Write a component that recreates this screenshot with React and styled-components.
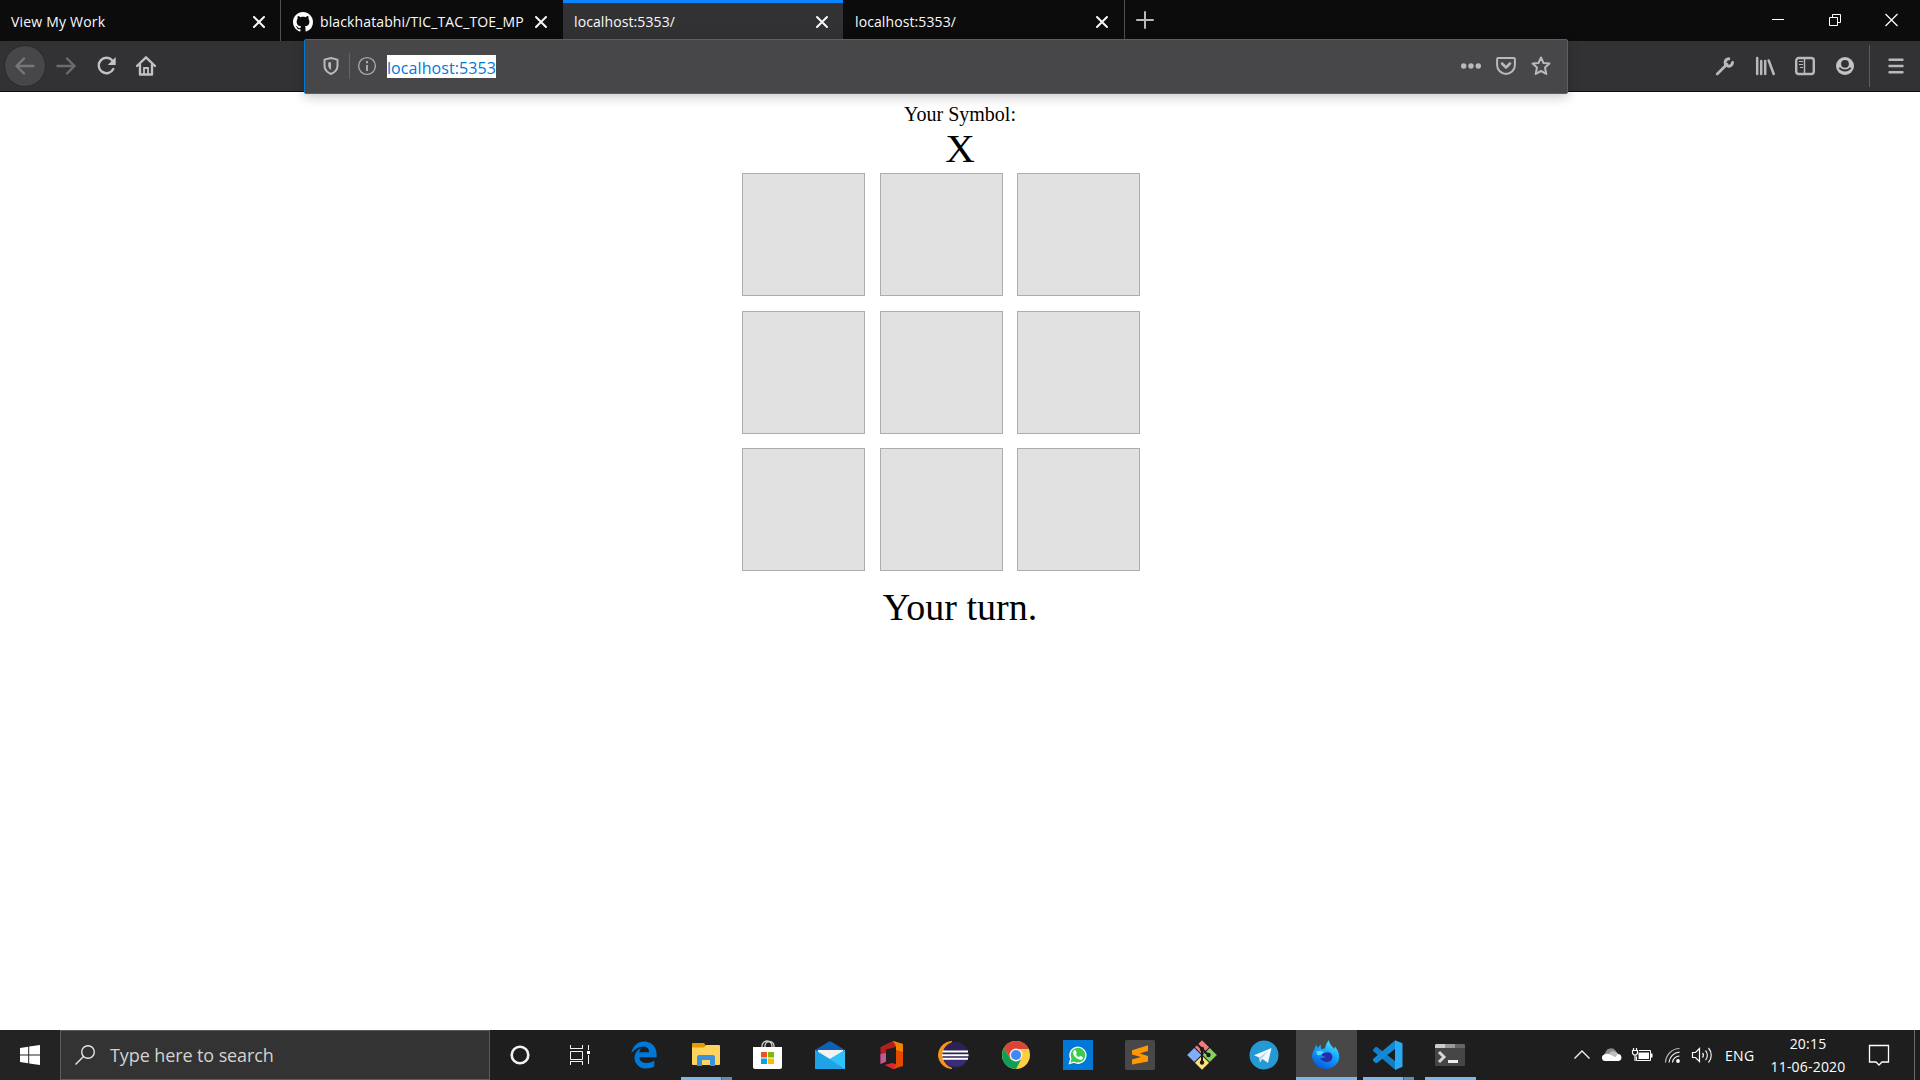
import React from "react";
import styled, { createGlobalStyle } from "styled-components";
import { FaEdgeLegacy } from "react-icons/fa";

const GlobalStyle = createGlobalStyle`
  * { box-sizing: border-box; }
  body { margin: 0; background: #fff; overflow: hidden; }
`;

const ui = `"Open Sans", "Noto Sans", sans-serif`;

const Screen = styled.div`
  width: 1920px;
  height: 1080px;
  display: flex;
  flex-direction: column;
`;

/* ---------- tab strip ---------- */

const TabStrip = styled.div`
  height: 41px;
  flex: none;
  display: flex;
  background: #0c0c0d;
`;

const Tab = styled.div`
  width: ${(p) => p.$width}px;
  height: 41px;
  display: flex;
  align-items: center;
  padding: 2px ${(p) => p.$end}px 0 ${(p) => p.$start || 11}px;
  font: 14px ${ui};
  color: #f9f9fa;
  background: ${(p) => (p.$active ? "#323234" : "transparent")};
  box-shadow: ${(p) => (p.$active ? "inset 0 3px #0a84ff" : "none")};
  border-right: ${(p) => (p.$divider ? "1px solid #4f4f51" : "none")};
`;

const TabTitle = styled.span`
  flex: 1;
  white-space: nowrap;
  letter-spacing: ${(p) => p.$track || 0}px;
`;

const Svg = styled.svg`
  display: block;
  flex: none;
  overflow: visible;
`;

const Favicon = styled(Svg)`
  margin: 0 7px 0 1px;
`;

const WindowControls = styled.div`
  margin-left: auto;
  display: flex;
  align-items: center;
  gap: 37px;
  padding: 0 18px 1px 0;
`;

const NewTab = styled.div`
  display: flex;
  align-items: center;
  padding: 0 0 1px 10px;
`;

/* ---------- toolbar ---------- */

const Toolbar = styled.div`
  height: 51px;
  flex: none;
  display: flex;
  background: #323234;
  border-bottom: 1px solid #0c0c0d;
`;

const NavButtons = styled.div`
  width: 304px;
  display: flex;
  align-items: center;
  gap: 1px;
  padding-left: 5px;
`;

const NavButton = styled.div`
  width: 40px;
  height: 40px;
  border-radius: 50%;
  display: grid;
  place-items: center;
  background: ${(p) => (p.$filled ? "#474749" : "transparent")};
  box-shadow: ${(p) => (p.$filled ? "0 0 0 1px #2a2a2c" : "none")};
`;

const UrlBar = styled.div`
  width: 1264px;
  height: 55px;
  margin-top: -2px;
  z-index: 1;
  display: flex;
  align-items: center;
  padding: 0 16px 1px 16px;
  background: #474749;
  border: 1px solid #0078d7;
  border-radius: 2px;
  box-shadow: 0 3px 12px rgba(0, 0, 0, 0.22);
`;

const UrlDivider = styled.div`
  width: 1px;
  height: 26px;
  margin: 0 7px 0 8px;
  background: #5f6670;
`;

const Url = styled.span`
  margin: 1px 0 0 10px;
  height: 23px;
  font: 16px/26px ${ui};
  letter-spacing: 0.08px;
  color: #0078d7;
  background: #fff;
`;

const UrlActions = styled.div`
  margin-left: auto;
  display: flex;
  gap: 15px;
`;

const Tools = styled.div`
  flex: 1;
  display: flex;
  align-items: center;
  justify-content: flex-end;
  gap: 20px;
  padding-right: 14px;
`;

const ToolDivider = styled.div`
  width: 1px;
  height: 42px;
  margin: 0 -4px 0 -6px;
  background: #5c5c5e;
`;

/* ---------- page ---------- */

const Page = styled.main`
  flex: 1;
  display: flex;
  flex-direction: column;
  align-items: center;
  padding-top: 11px;
  font-family: "Liberation Serif", "Times New Roman", serif;
  color: #000;
`;

const Label = styled.div`
  font-size: 20px;
  line-height: 23px;
`;

const Symbol = styled.div`
  font-size: 41px;
  line-height: 45px;
  padding-bottom: 2px;
`;

const Board = styled.div`
  width: 398px;
  margin-right: 38px;
  display: grid;
  grid-template-columns: 138px 137px 123px;
  grid-template-rows: 138px 137px 123px;
`;

const Cell = styled.button`
  width: 123px;
  height: 123px;
  padding: 0;
  background: #e1e1e1;
  border: 1px solid #adadad;
`;

const Status = styled.div`
  margin-top: 13px;
  font-size: 38px;
  line-height: 46px;
`;

/* ---------- taskbar ---------- */

const Taskbar = styled.div`
  height: 50px;
  flex: none;
  display: flex;
  background: #1e1e1e;
  font-family: ${ui};
`;

const Start = styled.div`
  width: 60px;
  display: grid;
  place-items: center;
  background: #232323;
`;

const Search = styled.div`
  width: 430px;
  display: flex;
  align-items: center;
  padding-left: 14px;
  border: 1px solid #5c5c5c;
  background: #333;
  color: #d2d2d2;
  font-size: 18px;
  line-height: 26px;
`;

const SearchText = styled.span`
  margin: 0 0 0 15px;
  letter-spacing: -0.1px;
  white-space: nowrap;
`;

const SystemButton = styled.div`
  width: 60px;
  padding: 9px 0 0 14px;
`;

const Apps = styled.div`
  display: flex;
  gap: 1px;
  margin-left: 4px;
`;

const TaskApp = styled.div`
  width: 61px;
  height: 50px;
  display: flex;
  flex-direction: column;
  justify-content: space-between;
  padding-top: 9px;
  background: ${(p) => (p.$current ? "#484848" : "transparent")};
  & > svg { margin-left: 14px; }
`;

const EdgeIcon = styled(FaEdgeLegacy)`
  && {
    width: 28px;
    height: 28px;
    margin: 2px 0 0 16px;
  }
  color: #0078d7;
`;

const Running = styled.div`
  height: 3px;
  margin: 0 ${(p) => (p.$full ? 0 : 5)}px;
  background: ${(p) => (p.$stacked ? "linear-gradient(90deg, #76b9ed 40px, #3f6282 40px, #3f6282 41px, #5a8db8 41px)" : "#76b9ed")};
`;

const Tray = styled.div`
  flex: 1;
  display: flex;
  align-items: center;
  gap: 6px;
  padding-left: 89px;
  color: #fff;
  font-size: 14px;
`;

const Language = styled.span`
  width: 31px;
  margin-left: 5px;
  letter-spacing: 0.3px;
`;

const Clock = styled.div`
  width: 92px;
  text-align: center;
  line-height: 23px;
  letter-spacing: 0.2px;
`;

const Notifications = styled.div`
  margin-left: 7px;
`;

const ShowDesktop = styled.div`
  width: 6px;
  height: 50px;
  margin-left: auto;
  border-left: 1px solid #6a6a6a;
`;

/* ---------- icons ---------- */

const Ico = ({ s = 20, children, ...rest }) => (
  <Svg width={s} height={s} viewBox={`0 0 ${s} ${s}`} fill="none" {...rest}>
    {children}
  </Svg>
);

const line = { stroke: "#b9b9ba", strokeWidth: 2.4, strokeLinecap: "round", strokeLinejoin: "round" };

const CloseTab = () => (
  <Ico s={12}>
    <path d="M1 1l10 10M11 1L1 11" stroke="#f9f9fa" strokeWidth="2" strokeLinecap="round" />
  </Ico>
);

const GitHubMark = () => (
  <Favicon width="20" height="20" viewBox="0 0 16 16">
    <path
      fill="#fff"
      d="M8 0C3.58 0 0 3.58 0 8c0 3.54 2.29 6.53 5.47 7.59.4.07.55-.17.55-.38 0-.19-.01-.82-.01-1.49-2.01.37-2.53-.49-2.69-.94-.09-.23-.48-.94-.82-1.13-.28-.15-.68-.52-.01-.53.63-.01 1.08.58 1.23.82.72 1.21 1.87.87 2.33.66.07-.52.28-.87.51-1.07-1.78-.2-3.64-.89-3.64-3.95 0-.87.31-1.59.82-2.15-.08-.2-.36-1.02.08-2.12 0 0 .67-.21 2.2.82.64-.18 1.32-.27 2-.27s1.36.09 2 .27c1.53-1.04 2.2-.82 2.2-.82.44 1.1.16 1.92.08 2.12.51.56.82 1.27.82 2.15 0 3.07-1.87 3.75-3.65 3.95.29.25.54.73.54 1.48 0 1.07-.01 1.93-.01 2.2 0 .21.15.46.55.38A8.01 8.01 0 0016 8c0-4.42-3.58-8-8-8z"
    />
  </Favicon>
);

const apps = [
  { id: "edge", icon: <EdgeIcon /> },
  {
    id: "explorer",
    running: true,
    stacked: true,
    icon: (
      <Ico s={32}>
        <path d="M2 5a1 1 0 011-1h11l1.500 2v5H2z" fill="#e19c00" />
        <path d="M2 8.500h12l2-2.500h13a1 1 0 011 1v18a1 1 0 01-1 1H3a1 1 0 01-1-1z" fill="#ffd45e" />
        <path d="M7 27V18a2 2 0 012-2h14a2 2 0 012 2v9h-5v-6h-8v6z" fill="#3a91dc" />
      </Ico>
    ),
  },
  {
    id: "store",
    icon: (
      <Ico s={32}>
        <path d="M10 9V7a5 5 0 0110 0v2M13 9V7a4.500 4.500 0 019 0v2" stroke="#cfcfcf" strokeWidth="1.300" />
        <path d="M1 8h29v20a2 2 0 01-2 2H3a2 2 0 01-2-2z" fill="#fff" />
        <path d="M9 13h6v5.500H9z" fill="#f25022" />
        <path d="M16 13h6v5.500h-6z" fill="#7fba00" />
        <path d="M9 19.500h6V25H9z" fill="#00a4ef" />
        <path d="M16 19.500h6V25h-6z" fill="#ffb900" />
      </Ico>
    ),
  },
  {
    id: "mail",
    icon: (
      <Ico s={32}>
        <path d="M1 11l14-8.500a2 2 0 012 0L31 11v4H1z" fill="#0f5fb4" />
        <path d="M4 11h25v9H4z" fill="#f3f3f3" />
        <path d="M1 11l15 9 15-9v19H1z" fill="#35b8f1" />
        <path d="M31 11v19L16 20z" fill="#2fc3f7" />
        <path d="M1 30V11l30 19z" fill="#1fa2e6" />
      </Ico>
    ),
  },
  {
    id: "office",
    icon: (
      <Ico s={32}>
        <path d="M4.500 8L17 2l3 1v5l-10 2.500V23l-5.500 2z" fill="#b3201f" />
        <path d="M4.500 15v10L10 22.500V14z" fill="#b85a9c" />
        <path d="M8.500 26l7.500-2 4 1v4.500L17 30z" fill="#e0262f" />
        <path d="M17 2l10 3v22l-10 3 3-4V8z" fill="#e34a00" />
        <path d="M17 2l10 3v8l-7-2V6z" fill="#f08205" />
      </Ico>
    ),
  },
  {
    id: "eclipse",
    icon: (
      <Ico s={32}>
        <path d="M14 2.500A13.500 13.500 0 0014 29.500 15 15 0 0114 2.500z" fill="#f7941e" stroke="#f7941e" />
        <circle cx="17.500" cy="16" r="13" fill="#2c2255" />
        <path d="M6 20h23a12.500 12.500 0 01-23 0z" fill="#43378b" opacity=".6" />
        <path d="M4.500 12.500h25.500M4 16.200h26.500M4.500 19.700h25.500" stroke="#fff" strokeWidth="1.900" />
      </Ico>
    ),
  },
  {
    id: "chrome",
    icon: (
      <Ico s={32}>
        <circle cx="16" cy="16" r="14" fill="#ffcd40" />
        <path d="M16 16V10h12.600A14 14 0 003.900 9L10 19z" fill="#db4437" />
        <path d="M3.900 9A14 14 0 0016 30l5.500-10.500L16 22l-5.500-2z" fill="#0f9d58" />
        <circle cx="16" cy="16" r="6.400" fill="#f1f1f1" />
        <circle cx="16" cy="16" r="5" fill="#4285f4" />
      </Ico>
    ),
  },
  {
    id: "whatsapp",
    icon: (
      <Ico s={32}>
        <path d="M1 1h30v30H1z" fill="#0078d7" />
        <path d="M7.500 24.500l1.300-4.600A8 8 0 1112 23.200z" fill="#3ccb50" stroke="#fff" strokeWidth="1.300" />
        <path d="M12 11.500l1.500-.5 1.300 3-.9 1.300c.8 1.500 1.800 2.300 3 2.900l1.200-1.400 2.800 1.400c.2 2-1.500 2.700-2.900 2.500-3.600-.6-6.600-3.700-6.900-6.700 0-1 .4-1.900.9-2.500z" fill="#fff" />
      </Ico>
    ),
  },
  {
    id: "sublime",
    icon: (
      <Ico s={32}>
        <rect x="1" y="1" width="30" height="30" rx="1.500" fill="#484848" />
        <path d="M8 11.300l16-5v5.600l-8.500 2.600L24 17v5.500L8 25.500v-5l9-2.500-9-2.500z" fill="#ff9800" />
      </Ico>
    ),
  },
  {
    id: "git",
    icon: (
      <Ico s={32}>
        <g transform="translate(16 16) rotate(45)">
          <rect x="-10.500" y="-10.500" width="10" height="10" fill="#f27a7c" />
          <rect x=".5" y="-10.500" width="10" height="10" fill="#84cf5e" />
          <rect x="-10.500" y=".5" width="10" height="10" fill="#7eaefc" />
          <rect x=".5" y=".5" width="10" height="10" fill="#ffe27c" />
        </g>
        <path d="M10 4l6 6v13M16 10l6.500 6" stroke="#1c1c1c" strokeWidth="2" />
        <circle cx="16" cy="10" r="2.200" fill="#1c1c1c" />
        <circle cx="22.500" cy="16" r="2.200" fill="#1c1c1c" />
        <circle cx="16" cy="23.500" r="2.200" fill="#1c1c1c" />
      </Ico>
    ),
  },
  {
    id: "telegram",
    icon: (
      <Ico s={32}>
        <circle cx="16" cy="16" r="14.500" fill="#2599d4" />
        <path d="M6 16.300L23.500 9 20 24l-5.500-4-2.500 3.500-.8-5z" fill="#f2f7fb" />
        <path d="M11.200 18.500L20 12l-6.300 7.500-1.700 4z" fill="#b9d3e4" />
      </Ico>
    ),
  },
  {
    id: "firefox",
    running: true,
    current: true,
    icon: (
      <Ico s={32}>
        <defs>
          <linearGradient id="ffx" x1="0.8" y1="0" x2="0.3" y2="1">
            <stop offset="0" stopColor="#4ff0fb" />
            <stop offset=".45" stopColor="#16a5ff" />
            <stop offset="1" stopColor="#0558dc" />
          </linearGradient>
        </defs>
        <path d="M4.500 10l1.500-4 2 3 2.500-3.500.5 4.500 4-.5c.5-3.500 2-6.500 4-8.500 0 4 3 5.500 5 9l1-2.500c4 5 5.500 10.500 3 15.500A14 14 0 012 18c0-3 1-6 2.500-8z" fill="url(#ffx)" />
        <path d="M11 14c3 1 5-1.500 8-.5 4 1 4.500 6 1.500 8.500-3.500 2.500-9 .5-10.500-3.500 2 1 4.500.5 5.500-1-2 .5-4-.5-4.500-3.500z" fill="#2b2ba8" />
        <path d="M6 12.500c3-1.500 6-1 8 1l-2.500 2c-2 1-3.500 1-4.500 0z" fill="#52dcfb" />
      </Ico>
    ),
  },
  {
    id: "vscode",
    running: true,
    stacked: true,
    icon: (
      <Ico s={32}>
        <path d="M1 10.500l2.500-2.500H5L23 22v8.500L1 12z" fill="#0f7fc9" />
        <path d="M1 21.500L3.500 24H5L23 10V1.500L1 20z" fill="#1489d6" />
        <path d="M23 1.200l7.500 3v23.600L23 31z" fill="#2aa9f4" />
      </Ico>
    ),
  },
  {
    id: "terminal",
    running: true,
    icon: (
      <Ico s={32}>
        <rect x="1" y="5" width="30" height="22" rx="1" fill="#464646" />
        <path d="M1 9V6l1-1h9v4z" fill="#ccc" />
        <path d="M11 5h10v4H11z" fill="#999" />
        <path d="M21 5h9l1 1v3H21z" fill="#666" />
        <path d="M5 13l5 5-5 5" stroke="#d6d6d6" strokeWidth="3" />
        <path d="M14 21h10v3H14z" fill="#eee" />
      </Ico>
    ),
  },
];

export default function App() {
  return (
    <Screen>
      <GlobalStyle />
      <TabStrip>
        <Tab $width={281} $end={15} $divider>
          <TabTitle $track={0.2}>View My Work</TabTitle>
          <CloseTab />
        </Tab>
        <Tab $width={282} $end={16}>
          <GitHubMark />
          <TabTitle $track={0.12}>blackhatabhi/TIC_TAC_TOE_MP</TabTitle>
          <CloseTab />
        </Tab>
        <Tab $width={280} $end={15} $active>
          <TabTitle $track={0.1}>localhost:5353/</TabTitle>
          <CloseTab />
        </Tab>
        <Tab $width={282} $start={12} $end={16} $divider>
          <TabTitle $track={0.1}>localhost:5353/</TabTitle>
          <CloseTab />
        </Tab>
        <NewTab>
          <Ico>
            <path d="M10 2v16M2 10h16" stroke="#b9b9ba" strokeWidth="2" strokeLinecap="round" />
          </Ico>
        </NewTab>
        <WindowControls>
          <Ico>
            <path d="M4 9.500h12" stroke="#fff" />
          </Ico>
          <Ico>
            <path d="M4.500 7.500h8v8h-8zM7.500 7.500v-3h8v8h-3" stroke="#fff" />
          </Ico>
          <Ico>
            <path d="M3.500 4l12 12M15.500 4l-12 12" stroke="#fff" strokeWidth="1.200" />
          </Ico>
        </WindowControls>
      </TabStrip>

      <Toolbar>
        <NavButtons>
          <NavButton $filled>
            <Ico>
              <path d="M18.500 10H1.500M9 2.500L1.500 10 9 17.500" {...line} stroke="#77777a" />
            </Ico>
          </NavButton>
          <NavButton>
            <Ico>
              <path d="M1.500 10h17M11 2.500l7.500 7.500-7.500 7.500" {...line} stroke="#6c6c6e" />
            </Ico>
          </NavButton>
          <NavButton>
            <Ico>
              <path d="M15.300 4.500A7.700 7.700 0 1016.300 13" {...line} stroke="#c2c2c3" />
              <path d="M18.700 1v8h-8z" fill="#c2c2c3" />
            </Ico>
          </NavButton>
          <NavButton>
            <Ico>
              <path d="M-1 10L8 1.300 17 10M2 9v9.500h12V9" {...line} stroke="#c2c2c3" />
              <path d="M6 18v-6h4v6" stroke="#c2c2c3" strokeWidth="1.800" />
            </Ico>
          </NavButton>
        </NavButtons>

        <UrlBar>
          <Ico>
            <path d="M10 2l6.500 1.600v6c0 4-3 7-6.500 8.400-3.500-1.400-6.500-4.400-6.500-8.400v-6z" {...line} strokeWidth="2" />
            <path d="M10 6v8c-1.700-1-2.800-2.600-2.800-4.400V6.500z" fill="#b9b9ba" />
          </Ico>
          <UrlDivider />
          <Ico>
            <circle cx="10" cy="10" r="8.400" stroke="#a9a9aa" strokeWidth="1.400" />
            <path d="M10 9v6M10 5v2.200" stroke="#a9a9aa" strokeWidth="2" />
          </Ico>
          <Url>localhost:5353</Url>
          <UrlActions>
            <Ico>
              <circle cx="2.700" cy="10" r="2.700" fill="#b9b9ba" />
              <circle cx="10" cy="10" r="2.700" fill="#b9b9ba" />
              <circle cx="17.300" cy="10" r="2.700" fill="#b9b9ba" />
            </Ico>
            <Ico>
              <path d="M2.300 2h15.400a1.200 1.200 0 011.200 1.200V9a8.900 8.900 0 01-17.800 0V3.200A1.200 1.200 0 012.300 2z" {...line} strokeWidth="2" />
              <path d="M6 7.500l4 4 4-4" {...line} strokeWidth="2.500" />
            </Ico>
            <Ico>
              <path d="M10 1.500l2.500 5.500 6 .6-4.500 4 1.300 6.300L10 15l-5.300 2.900L6 11.600 1.500 7.600l6-.6z" {...line} strokeWidth="2" />
            </Ico>
          </UrlActions>
        </UrlBar>

        <Tools>
          <Ico>
            <path d="M2.200 18L12 8.300" {...line} strokeWidth="2.700" />
            <path d="M17.200 6.200A3.700 3.700 0 1113.500 2.600" {...line} strokeWidth="3" transform="translate(.3 .2)" />
          </Ico>
          <Ico>
            <path d="M2.200 2v16M6.200 5v13M10.200 5v13M13.700 4.500l5 13.500" {...line} strokeWidth="2.500" />
          </Ico>
          <Ico>
            <rect x="1.200" y="2" width="17.600" height="16" rx="2.500" {...line} strokeWidth="2.400" />
            <path d="M9.500 2v16" stroke="#b9b9ba" strokeWidth="1.500" />
            <path d="M4 5.500h4M4 8.500h4M5 11.500h3" stroke="#b9b9ba" strokeWidth="1.200" />
          </Ico>
          <Ico>
            <circle cx="10" cy="10" r="9" fill="#c2c2c3" />
            <circle cx="10" cy="7.800" r="3.900" fill="#323234" />
            <path d="M4.300 11.800c1.300 1.800 3.300 2.700 5.700 2.700s4.400-.9 5.700-2.700" stroke="#323234" strokeWidth="1.800" />
          </Ico>
          <ToolDivider />
          <Ico>
            <path d="M3.500 3.800h13M3.500 10h13M3.500 16.200h13" {...line} />
          </Ico>
        </Tools>
      </Toolbar>

      <Page>
        <Label>Your Symbol:</Label>
        <Symbol>X</Symbol>
        <Board>
          {Array.from({ length: 9 }, (_, i) => (
            <Cell key={i} />
          ))}
        </Board>
        <Status>Your turn.</Status>
      </Page>

      <Taskbar>
        <Start>
          <Ico>
            <path d="M0 2.900L8.200 1.800v7.700H0zM9.200 1.600L20 0v9.500H9.200zM0 10.500h8.200v7.700L0 17.100zM9.200 10.500H20V20L9.200 18.400z" fill="#fff" />
          </Ico>
        </Start>
        <Search>
          <Ico>
            <circle cx="13" cy="7" r="6.300" stroke="#e6e6e6" strokeWidth="1.400" />
            <path d="M8.500 11.500L.5 19.500" stroke="#e6e6e6" strokeWidth="1.400" />
          </Ico>
          <SearchText>Type here to search</SearchText>
        </Search>
        <SystemButton>
          <Ico s={32}>
            <circle cx="16" cy="16" r="8.300" stroke="#f2f2f2" strokeWidth="2.600" />
          </Ico>
        </SystemButton>
        <SystemButton>
          <Ico s={32}>
            <path d="M6.500 6v4M18.500 6v4M6 9.500h13M6.500 12.500h12v8h-12zM6 22.500h13M6.500 22v4M18.500 22v4M24.500 6v5M24.500 16v9" stroke="#f2f2f2" />
            <path d="M23 12h3v3h-3z" fill="#fff" />
          </Ico>
        </SystemButton>
        <Apps>
          {apps.map((a) => (
            <TaskApp key={a.id} $current={a.current}>
              {a.icon}
              {a.running && <Running $full={a.current} $stacked={a.stacked} />}
            </TaskApp>
          ))}
        </Apps>
        <Tray>
          <Ico s={24}>
            <path d="M4.500 15.500L12 8l7.500 7.500" stroke="#f2f2f2" strokeWidth="1.400" />
          </Ico>
          <Ico s={24}>
            <path d="M5 15a4 4 0 01.500-5.500 5.700 5.700 0 0110-2l2 4z" fill="#8b8b8b" />
            <path d="M9 10.500a5.500 5.500 0 019.500 1l-5 3.500z" fill="#bdbdbd" />
            <path d="M5 18a3.300 3.300 0 01-.5-6.500 6 6 0 014.500-.5l6 3 3-3a3.600 3.600 0 011 7z" fill="#fff" />
          </Ico>
          <Ico s={24}>
            <path d="M2.500 7.500h5v2a2.500 2.500 0 01-5 0zM3.500 5v3M6.500 5v3M5 12v6" stroke="#fff" strokeWidth="1.200" />
            <path d="M9 7.500h11.500v10H6.500v-4" stroke="#fff" />
            <path d="M8.500 9.500H19v6.500H8.500zM21 10.500h1.500v4H21z" fill="#fff" />
          </Ico>
          <Ico s={24}>
            <circle cx="18" cy="18" r="1.900" fill="#fff" />
            <path d="M5.500 19.500A14.500 14.500 0 0119.500 5.500" stroke="#b5b5b5" strokeWidth="1.200" />
            <path d="M9 19.500A11 11 0 0119.500 9.200" stroke="#f2f2f2" strokeWidth="1.200" />
            <path d="M12.500 19.500a7 7 0 017-6.500" stroke="#f2f2f2" strokeWidth="1.200" />
          </Ico>
          <Ico s={24}>
            <path d="M2.500 9.500h3l4-4v13l-4-4h-3z" stroke="#fff" strokeWidth="1.200" />
            <path d="M12.500 10a3.500 3.500 0 010 4.500M15.500 7.500a7 7 0 010 9.500M18.500 5a11 11 0 010 14.500" stroke="#eee" strokeWidth="1.200" />
          </Ico>
          <Language>ENG</Language>
          <Clock>
            20:15
            <br />
            11-06-2020
          </Clock>
          <Notifications>
            <Ico s={24}>
              <path d="M2.500 2.500h19v16.500h-6.500l-3 3-3-3H2.500z" stroke="#fff" strokeWidth="1.300" />
            </Ico>
          </Notifications>
          <ShowDesktop />
        </Tray>
      </Taskbar>
    </Screen>
  );
}
